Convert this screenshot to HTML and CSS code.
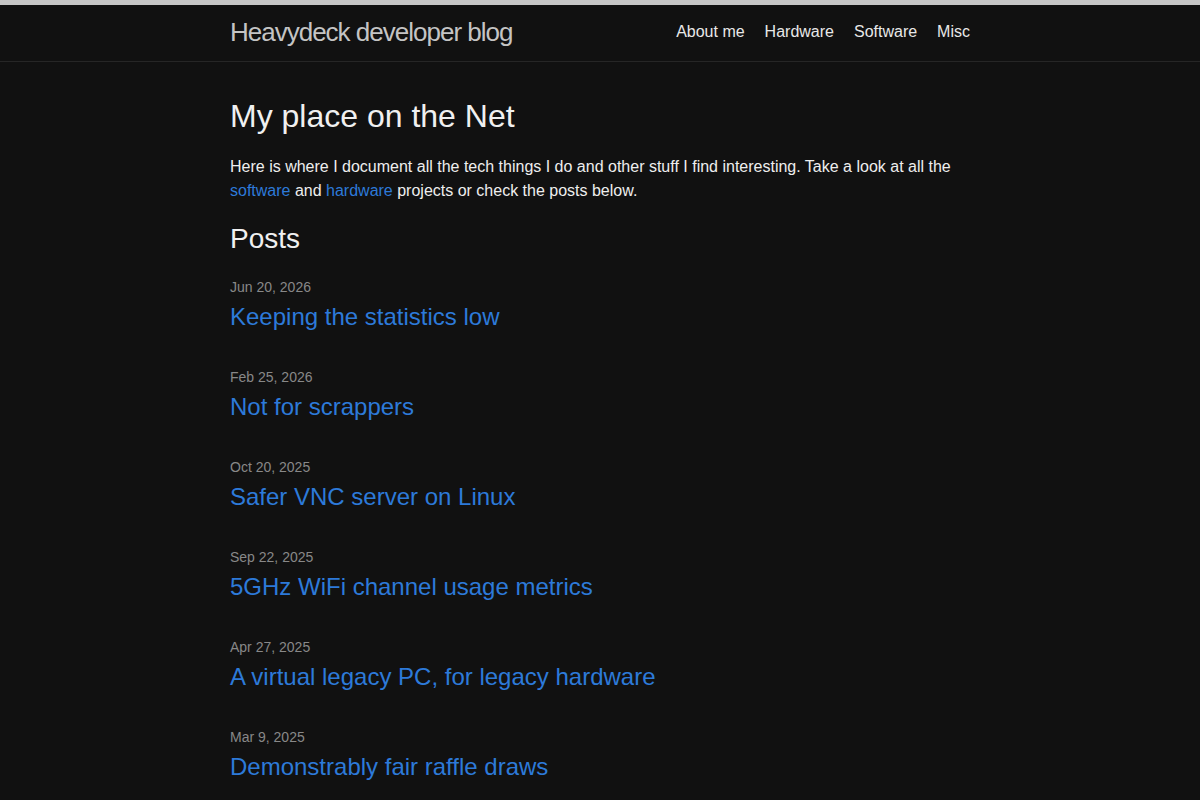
FILE: index.html
```html
<!DOCTYPE html>
<html lang="en">
<head>
    <meta charset="UTF-8">
    <meta name="viewport" content="width=device-width, initial-scale=1.0">
    <title>Heavydeck developer blog</title>
    <link rel="stylesheet" href="styles.css">
</head>
<body>
    <header class="site-header">
        <div class="wrapper header-row">
            <a class="site-title" href="#">Heavydeck developer blog</a>
            <nav class="site-nav">
                <a class="page-link" href="#">About me</a>
                <a class="page-link" href="#">Hardware</a>
                <a class="page-link" href="#">Software</a>
                <a class="page-link" href="#">Misc</a>
            </nav>
        </div>
    </header>

    <main class="page-content">
        <div class="wrapper">
            <h1>My place on the Net</h1>
            <p>Here is where I document all the tech things I do and other stuff I find interesting. Take a look at all the <a href="#">software</a> and <a href="#">hardware</a> projects or check the posts below.</p>

            <h2 class="post-list-heading">Posts</h2>
            <ul class="post-list">
                <li>
                    <span class="post-meta">Jun 20, 2026</span>
                    <h3><a class="post-link" href="#">Keeping the statistics low</a></h3>
                </li>
                <li>
                    <span class="post-meta">Feb 25, 2026</span>
                    <h3><a class="post-link" href="#">Not for scrappers</a></h3>
                </li>
                <li>
                    <span class="post-meta">Oct 20, 2025</span>
                    <h3><a class="post-link" href="#">Safer VNC server on Linux</a></h3>
                </li>
                <li>
                    <span class="post-meta">Sep 22, 2025</span>
                    <h3><a class="post-link" href="#">5GHz WiFi channel usage metrics</a></h3>
                </li>
                <li>
                    <span class="post-meta">Apr 27, 2025</span>
                    <h3><a class="post-link" href="#">A virtual legacy PC, for legacy hardware</a></h3>
                </li>
                <li>
                    <span class="post-meta">Mar 9, 2025</span>
                    <h3><a class="post-link" href="#">Demonstrably fair raffle draws</a></h3>
                </li>
            </ul>
        </div>
    </main>
</body>
</html>
```

FILE: styles.css
```css
body, h1, h2, h3, p, ul, li { margin: 0; padding: 0; }
body { font-family: "Liberation Sans", Arial, sans-serif; font-size: 16px; line-height: 1.5; color: #e6e6e6; background: #111111; }
a { color: #2d7ad9; text-decoration: none; }
h1, h2, h3, p, ul { margin-bottom: 15px; }
h1, h2, h3 { font-weight: 400; }

.wrapper { max-width: 740px; margin: 0 auto; padding: 0 30px; }

.site-header { border-top: 5px solid #c6c6c6; border-bottom: 1px solid #262626; min-height: 56px; }
.header-row { display: flex; justify-content: space-between; align-items: flex-start; }
.site-title { font-size: 26px; line-height: 54px; letter-spacing: -1px; color: #c4c4c4; }
.site-nav { display: flex; gap: 20px; line-height: 54px; }
.site-nav .page-link { color: #e8e8e8; }

.page-content { padding: 30px 0; }
h1 { font-size: 32px; color: #f0f0f0; }
p { color: #eeeeee; }
.post-list-heading { font-size: 28px; color: #f0f0f0; }
.post-list { list-style: none; }
.post-list > li { margin-bottom: 30px; }
.post-meta { font-size: 14px; color: #888888; }
.post-list h3 { font-size: 24px; }
.post-link { display: block; }
```
